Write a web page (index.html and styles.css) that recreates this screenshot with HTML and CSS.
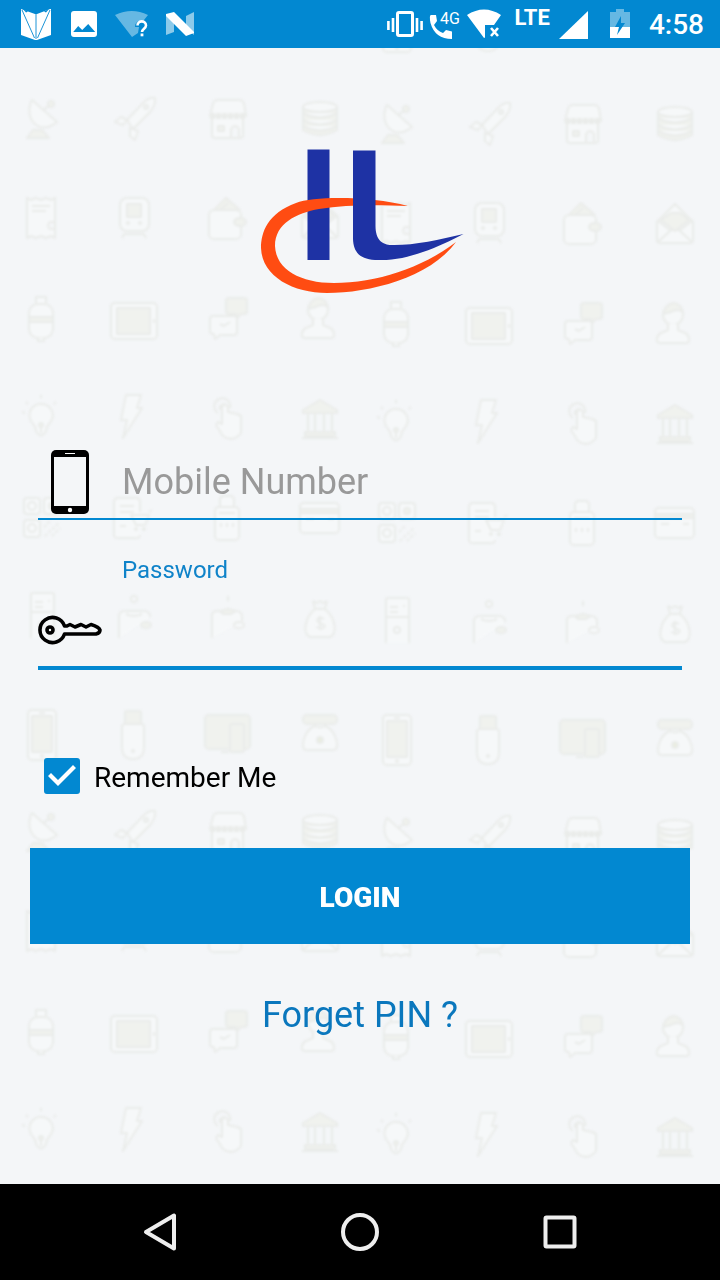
FILE: index.html
```html
<!DOCTYPE html>
<html lang="en">
<head>
<meta charset="utf-8">
<meta name="viewport" content="width=device-width, initial-scale=1">
<title>Login</title>
<link rel="stylesheet" href="styles.css">
</head>
<body>
<header class="status-bar">
  <div class="notifications">
    <svg class="notice" viewBox="0 0 48 48" aria-hidden="true">
      <path fill="#fff" d="M9 9 23 14h2L38 9h1v26l-14 5h-2L9 35z"/>
      <path fill="none" stroke="#0288d1" stroke-width=".9" d="M10 10 22.500 38M38 10 25.500 38M24 14v25"/>
      <path fill="#0288d1" d="m11 9 5 2.500-2 1zM37 9l-5 2.500 2 1z"/>
    </svg>
    <svg class="notice" viewBox="0 0 48 48" aria-hidden="true">
      <rect x="11" y="11" width="26" height="26" rx="3" fill="#fff"/>
      <path fill="#0288d1" d="m14 32 5-6 4 4 6-6 7 8z" transform="translate(-.8 0)"/>
    </svg>
    <svg class="notice" viewBox="0 0 48 48" aria-hidden="true">
      <path fill="#66b8e3" d="M7 15q17-8 33 0l-4 5q-9 0-9 7h4l-1 6-6 4z"/>
      <path fill="none" stroke="#fff" stroke-width="2.600" d="M29.500 25.500c0-5.500 8.500-5.500 8.500 0 0 3-4 3.500-4 6.500"/>
      <rect x="32.600" y="33.500" width="2.800" height="2.800" fill="#fff"/>
    </svg>
    <svg class="notice" viewBox="0 0 48 48" aria-hidden="true">
      <path fill="#8ccaea" d="M10 14v21l8-3V20zM38 12l-8 4v12l8 7z"/>
      <path fill="#fff" d="m10 14 8-2 20 20v1l-8 3-20-20z"/>
    </svg>
  </div>
  <div class="indicators">
    <svg class="vibrate" viewBox="0 0 36 32" aria-hidden="true">
      <rect x="10.500" y="4.500" width="15" height="23" rx="1.500" fill="none" stroke="#fff" stroke-width="3"/>
      <path stroke="#fff" stroke-width="2.600" d="M1.400 13v9M6 10v14M30 10v14M34.600 13v9"/>
    </svg>
    <svg class="call" viewBox="0 0 32 32" aria-hidden="true">
      <path fill="#fff" d="M2 7h5l1 6-3 4q3 6 9 8l3-3 6 1.500V31Q6 31 1.500 15 0 7 2 7z"/>
      <text class="call-text" x="11" y="16">4G</text>
    </svg>
    <svg class="wifi" viewBox="0 0 34 32" aria-hidden="true">
      <path fill="#fff" d="M0 7q17-11 34 0l-7 10h-9v12.500L17 30z"/>
      <path stroke="#fff" stroke-width="2.600" d="m24 20 7 8m0-8-7 8"/>
    </svg>
    <span class="network">LTE</span>
    <svg class="signal" viewBox="0 0 30 32" aria-hidden="true"><path fill="#fff" d="M29 3v28H0z"/></svg>
    <svg class="battery" viewBox="0 0 20 32" aria-hidden="true">
      <path fill="#66b8e3" d="M0 4h6V1h8v3h6v16H0z"/>
      <path fill="#fff" d="M0 19h20v11H0z"/>
      <path fill="#0288d1" d="M11 8 5 19h4l-2 8 8-12h-4z"/>
    </svg>
    <time class="clock">4:58</time>
  </div>
</header>

<main class="screen">
  <svg class="wallpaper" viewBox="0 48 720 1136" preserveAspectRatio="xMidYMin slice" aria-hidden="true">
    <defs>
      <g id="tile">
        <!-- dish, rocket, shop, coins -->
        <g transform="translate(41 120)"><path d="M-9-20c-9 18 7 37 25 22zM3-10l7-7"/><circle class="tint" cx="10" cy="-16" r="3"/><path class="tint" d="m-14 18 6-8H1l7 8z"/></g>
        <g transform="translate(134 120)"><path d="m-7 0 16-17q6-6 12-5 1 7-5 14L-1 9zM-7 0l-6-3-6 5 8 3zM-1 9l5 2-3 9-5-4V8z"/><circle cx="12" cy="-13" r="2"/></g>
        <g transform="translate(228 120)"><path d="M-15-16q1-4 5-4H11q4 0 5 4l2 12h-36zM-16-1v16q0 3 3 3h25q3 0 3-3V-1M3 18V9q4-6 8 0v9"/><path class="band" d="M-18-4h36"/><rect class="tint" x="-10" y="6" width="6" height="5"/></g>
        <g transform="translate(320 120)"><path class="tint" d="M-17-14v24q17 10 34 0v-24"/><ellipse cy="-13" rx="17" ry="5"/><path d="M-17-7q17 9 34 0M-17 0q17 9 34 0M-17 6q17 9 34 0"/></g>
        <!-- receipt, train, wallet, letter -->
        <g transform="translate(41 218)"><path d="m-14-20 4 2 5-2 5 2 5-2 5 2 4-2V20l-4-2-5 2-5-2-5 2-5-2-4 2zM-9-12H9M-9-7H5M14 4H9q-4 4 0 7h5"/></g>
        <g transform="translate(134 218)"><rect x="-14" y="-20" width="29" height="33" rx="7"/><rect class="tint" x="-7" y="-14" width="14" height="13"/><path d="m-9 15-3 5M9 15l3 5M-9 16H9"/><circle cx="-6" cy="5" r="1"/><circle cx="6" cy="5" r="1"/></g>
        <g transform="translate(228 218)"><path class="tint" d="m-14-8 12-12 14 12M-8-8l8-7"/><rect x="-19" y="-8" width="32" height="29" rx="5"/><ellipse class="tint" cx="12" cy="4" rx="6" ry="4"/></g>
        <g transform="translate(320 218)"><path d="m-18-1 18-18 18 18v18q0 3-3 3h-30q-3 0-3-3zM-17 19-4 7h8l13 12M-18-3-4 8m22-11L4 8"/><path class="tint" d="m-14-3 10-7h9l9 7L0 8z"/></g>
        <!-- cylinder, tablet, chat, person -->
        <g transform="translate(41 320)"><rect x="-12" y="-16" width="24" height="34" rx="9"/><path d="M-5-17v-6H5v6M-3 18v3h6v-3"/><path class="tint" d="M-12-3h24v5h-24z"/></g>
        <g transform="translate(134 320)"><rect x="-23" y="-17" width="46" height="36" rx="4"/><rect class="tint" x="-17" y="-12" width="33" height="26"/><path d="M20-1v4"/></g>
        <g transform="translate(228 320)"><path class="tint" d="M1-22h15q3 0 3 3v10q0 3-3 3h-3l-3 3-2-3H1q-3 0-3-3v-10q0-3 3-3z"/><path d="M-15-4H6q3 0 3 3v13q0 3-3 3h-14l-5 4-1-5q-5 0-4-4V-1q0-3 3-3zM-8 4l4 2 6-4"/></g>
        <g transform="translate(318 320)"><circle cy="-10" r="10"/><path class="tint" d="M-10-11q3-11 11-11 7 1 9 9-5-4-12 0z"/><path d="M-5-1v6l-7 3q-4 2-4 7 0 3 3 3h26q3 0 3-3 0-5-4-7l-7-3v-6"/></g>
        <!-- bulb, bolt, touch, bank -->
        <g transform="translate(41 417)"><path d="M-5 14q0-4-3-7c-8-10-1-20 8-20 10 0 16 11 8 20q-3 3-3 7l-3 4h-4zM0 9v7M-13-13l-2-2M13-13l2-2M0-19v-3M-16-4l-3-1"/><circle class="tint" cy="8" r="2"/></g>
        <g transform="translate(132 417)"><path d="m-6-22h15L5-9h5L-9 21l4-18h-6z"/></g>
        <g transform="translate(228 417)"><path d="M-6-9V7l-4-2-2 3 7 11q10 7 18-3V-1L9-3 0-5v-5q-3-5-6 0z"/><path fill="none" d="M-10-4a8 8 0 1 1 12-5M-8-7a4 4 0 1 1 8-3"/></g>
        <g transform="translate(320 417)"><path class="tint" d="m-17-7 17-10 17 10v3h-34zM-15 15h30v4h-30z"/><path d="M-12-4v19M-5-4v19M4-4v19M12-4v19M-18 21h36"/></g>
        <!-- code, cart list, reader, card -->
        <g transform="translate(41 517)"><rect x="-17" y="-19" width="16" height="16" rx="3"/><rect x="3" y="-19" width="16" height="16" rx="3"/><rect x="-17" y="3" width="16" height="17" rx="3"/><circle cx="-9" cy="-11" r="4"/><circle class="tint" cx="11" cy="-11" r="3"/><circle cx="-9" cy="11" r="4"/><path stroke-dasharray="3 2" d="m3 10 7-7M4 19 18 6M11 19l8-8"/></g>
        <g transform="translate(131 517)"><path d="M9-5v-10q0-4-4-4h-18q-4 0-4 4v33q0 3 4 3H5q4 0 4-3"/><path d="M-11-11H3M-11-5H3M-11 9h6M18-5l3-2M0-2h18L14 8H5z"/><circle cx="5" cy="12" r="1"/><circle cx="13" cy="12" r="1"/></g>
        <g transform="translate(227 517)"><path d="M-7-10v-7q0-4 4-4h6q4 0 4 4v7"/><rect x="-12" y="-10" width="24" height="33" rx="4"/><path d="M-8-4H8M-6 6v4M0 6v4M6 6v4"/></g>
        <g transform="translate(320 517)"><rect x="-20" y="-14" width="39" height="30" rx="4"/><path class="tint" d="M-20-8h39v4h-39z"/><path d="M-14 2h8M8 2h6"/></g>
        <!-- server, transfer wallets, money bag -->
        <g transform="translate(41 617)"><path d="M-10 21v-43q0-2 2-2h19q2 0 2 2v43M-10-5h23M-6-15h8M-6-10h8M7-16h2"/><circle cx="1" cy="8" r="3"/></g>
        <g transform="translate(134 617)"><path d="M-15 21V-1q0-5 6-5H10q6 0 6 6M-8-3q8 4 16 0"/><circle cy="-18" r="3"/><ellipse class="tint" cx="12" cy="8" rx="5" ry="3"/></g>
        <g transform="translate(228 617)"><path d="M-16 21V-2q0-4 6-4H8q6 0 6 6v4M0-21v5"/><path class="tint" d="M-8-6 0-8 8-6 3-3h-8z"/><ellipse cx="11" cy="8" rx="5" ry="3"/></g>
        <g transform="translate(320 617)"><path d="M-5-8C-16 1-18 19-9 20H9C18 19 16 1 5-8zM-7-16l2 8M7-16l-2 8M-7-16l4 2 3-2 3 2 4-2M4 2c-7-4-10 3-2 5 6 2 1 7-6 3M0-1v14"/></g>
        <!-- phone, usb stick, devices, telephone -->
        <g transform="translate(42 735)"><rect x="-14" y="-25" width="28" height="50" rx="4"/><rect class="tint" x="-10" y="-19" width="20" height="36"/><path d="M-3-22h6"/><circle cy="21" r="1"/></g>
        <g transform="translate(133 735)"><rect class="tint" x="-8" y="-24" width="16" height="13" rx="2"/><path d="M-11-8q0-3 3-3H8q3 0 3 3v20q0 12-11 12t-11-12z"/><circle cy="16" r="1"/></g>
        <g transform="translate(228 735)"><rect class="tint" x="-23" y="-20" width="45" height="34" rx="4"/><rect class="tint" x="2" y="-11" width="14" height="28" rx="2"/><path d="M-7 17H1"/></g>
        <g transform="translate(320 735)"><rect class="tint" x="-17" y="-20" width="34" height="9" rx="4"/><path d="M-5-9C-13-6-17 3-17 10q0 5 4 5h26q4 0 4-5C17 3 13-6 5-9q-5 3-10 0z"/><circle class="dot" cy="5" r="3"/></g>
      </g>
    </defs>
    <g class="drawings">
      <use href="#tile" x="355" y="-708"/>
      <use href="#tile"/>
      <use href="#tile" x="355" y="5"/>
      <use href="#tile" y="713"/>
      <use href="#tile" x="355" y="718"/>
    </g>
  </svg>

  <svg class="logo" viewBox="256 148 208 146" role="img" aria-label="HL">
    <path fill="#1e32a4" d="M307.500 149.500h22v110.500h-22z"/>
    <path fill="#ff4c12" d="M408 206C371 196 314 196 296 203 268 213 261 232 261 248c1 29 33 45 66 45 42 0 103-15 129-51-34 26-80 41-122 41-33 0-58-13-59-37 0-23 22-33 44-37 30-5 62-4 89-3z"/>
    <path fill="#1e32a4" d="M353 150.500h22.500V226c0 14 7 18 14 19 21 1 49-5 74-11-27 14-57 27-85 26-19 0-25-8-25.500-21z"/>
  </svg>

  <form class="login">
    <div class="fields">
      <div class="field">
        <svg class="field-icon" viewBox="0 0 64 64" aria-hidden="true">
          <rect x="13" y="0" width="38" height="64" rx="5"/>
          <path fill="#f4f6f8" d="M16 7h32v49H16z"/>
          <path stroke="#fff" d="M27 3.500h10"/><circle cx="32" cy="60" r="2.200" fill="#fff"/>
        </svg>
        <input class="field-input" type="tel" placeholder="Mobile Number" aria-label="Mobile Number">
      </div>
      <label class="field-label" for="password">Password</label>
      <div class="field field-active">
        <svg class="field-icon" viewBox="0 0 64 64" aria-hidden="true">
          <path fill="none" stroke="#000" stroke-width="3.600" stroke-linejoin="round" d="M26.500 28A12.600 12.600 0 1 0 26.500 36H58q4-1 4-4-1-3-9-5.500l-5 2.500-5-2.500-6 2.500-5-2.500-3 1.500z"/>
          <circle cx="12" cy="32" r="3" fill="none" stroke="#000" stroke-width="3.600"/>
        </svg>
        <input class="field-input" type="password" id="password">
      </div>
    </div>
    <div class="remember">
      <input class="remember-box" type="checkbox" id="remember" checked>
      <label class="remember-label" for="remember">Remember Me</label>
    </div>
    <button class="submit" type="submit">LOGIN</button>
  </form>
  <a class="forgot" href="#">Forget PIN ?</a>
</main>

<nav class="system-nav">
  <button class="nav-button" type="button" aria-label="Back"><svg class="nav-icon" viewBox="0 0 40 40" aria-hidden="true"><path d="M34 3.500v33L6 20z"/></svg></button>
  <button class="nav-button" type="button" aria-label="Home"><svg class="nav-icon" viewBox="0 0 40 40" aria-hidden="true"><circle cx="20" cy="20" r="17"/></svg></button>
  <button class="nav-button" type="button" aria-label="Recent apps"><svg class="nav-icon" viewBox="0 0 40 40" aria-hidden="true"><rect x="5.500" y="5.500" width="29" height="29" rx="1"/></svg></button>
</nav>
</body>
</html>
```
FILE: styles.css
```css
* {
  box-sizing: border-box;
}

body {
  margin: 0;
  min-height: 100vh;
  display: flex;
  flex-direction: column;
  background: #f4f6f8;
  color: #000;
  font-family: Roboto, "Noto Sans", sans-serif;
}

.status-bar {
  display: flex;
  align-items: center;
  justify-content: space-between;
  height: 48px;
  padding: 0 16px 0 12px;
  background: #0288d1;
  color: #fff;
}

.notifications,
.indicators {
  display: flex;
  align-items: center;
}

.notice {
  width: 48px;
  height: 48px;
}

.vibrate,
.call,
.wifi,
.signal,
.battery {
  height: 32px;
  flex: none;
}

.vibrate { width: 36px; }
.call { width: 32px; margin-left: 6px; }
.wifi { width: 34px; margin-left: 6px; }
.signal { width: 30px; margin-left: 9px; }
.battery { width: 20px; margin-left: 21px; }

.call-text {
  fill: #fff;
  font-size: 16px;
}

.network {
  margin-left: 13px;
  padding-bottom: 12px;
  font-size: 22px;
  line-height: 24px;
  font-weight: 700;
}

.clock {
  margin-left: 19px;
  padding-top: 2px;
  font-size: 28px;
  line-height: 46px;
  font-weight: 500;
}

.screen {
  position: relative;
  z-index: 0;
  flex: 1;
  display: flex;
  flex-direction: column;
  align-items: center;
  padding: 100px 30px 40px;
}

.wallpaper {
  position: absolute;
  inset: 0;
  z-index: -1;
  width: 100%;
  height: 100%;
}

.drawings {
  fill: #f6f8f9;
  stroke: #eaecea;
  stroke-width: 2;
  stroke-linejoin: round;
  filter: blur(1px);
}

.tint {
  fill: #f0f2ee;
}

.dot {
  fill: #eaeee0;
}

.band {
  stroke-width: 6;
  stroke-dasharray: 5 1;
}

.logo {
  width: 208px;
  height: 146px;
}

.login {
  align-self: stretch;
  display: flex;
  flex-direction: column;
  margin-top: 156px;
}

.fields {
  display: flex;
  flex-direction: column;
  padding: 0 8px;
}

.field {
  display: flex;
  gap: 20px;
  padding-bottom: 4px;
  border-bottom: 2px solid #0288d1;
}

.field-active {
  border-bottom-width: 4px;
}

.field-icon {
  width: 64px;
  height: 64px;
  flex: none;
}

.field-input {
  flex: 1;
  min-width: 0;
  padding: 0;
  border: 0;
  outline: 0;
  background: transparent;
  color: #000;
  font: 36px/64px Roboto, "Noto Sans", sans-serif;
}

.field-input::placeholder {
  color: #999;
  opacity: 1;
}

.field-label {
  margin: 36px 0 14px 84px;
  color: #0f83c9;
  font-size: 24px;
  line-height: 28px;
}

.remember {
  display: flex;
  align-items: center;
  gap: 14px;
  margin: 86px 0 52px;
  padding-left: 14px;
}

.remember-box {
  appearance: none;
  display: grid;
  place-items: center;
  width: 36px;
  height: 36px;
  margin: 0;
  border-radius: 3px;
  background: #fff;
  border: 3px solid #0288d1;
}

.remember-box:checked {
  background: #0288d1;
}

.remember-box:checked::before {
  content: "";
  width: 28px;
  height: 22px;
  background: #fff;
  clip-path: polygon(0 11px, 3px 8px, 10px 15px, 25px 0, 28px 3px, 10px 21px);
}

.remember-label {
  padding-top: 4px;
  font-size: 28px;
  line-height: 36px;
}

.submit {
  height: 96px;
  padding: 4px 0 0;
  border: 0;
  background: #0288d1;
  color: #fff;
  font: 900 28px/32px Roboto, "Noto Sans", sans-serif;
}

.forgot {
  margin-top: 50px;
  color: #0a77bd;
  font-size: 36px;
  line-height: 42px;
  text-decoration: none;
}

.system-nav {
  display: flex;
  justify-content: center;
  gap: 104px;
  height: 96px;
  background: #000;
}

.nav-button {
  display: grid;
  place-items: center;
  width: 96px;
  padding: 0;
  border: 0;
  background: transparent;
}

.nav-icon {
  width: 40px;
  height: 40px;
  fill: none;
  stroke: #eee;
  stroke-width: 4;
  stroke-linejoin: round;
}
```
